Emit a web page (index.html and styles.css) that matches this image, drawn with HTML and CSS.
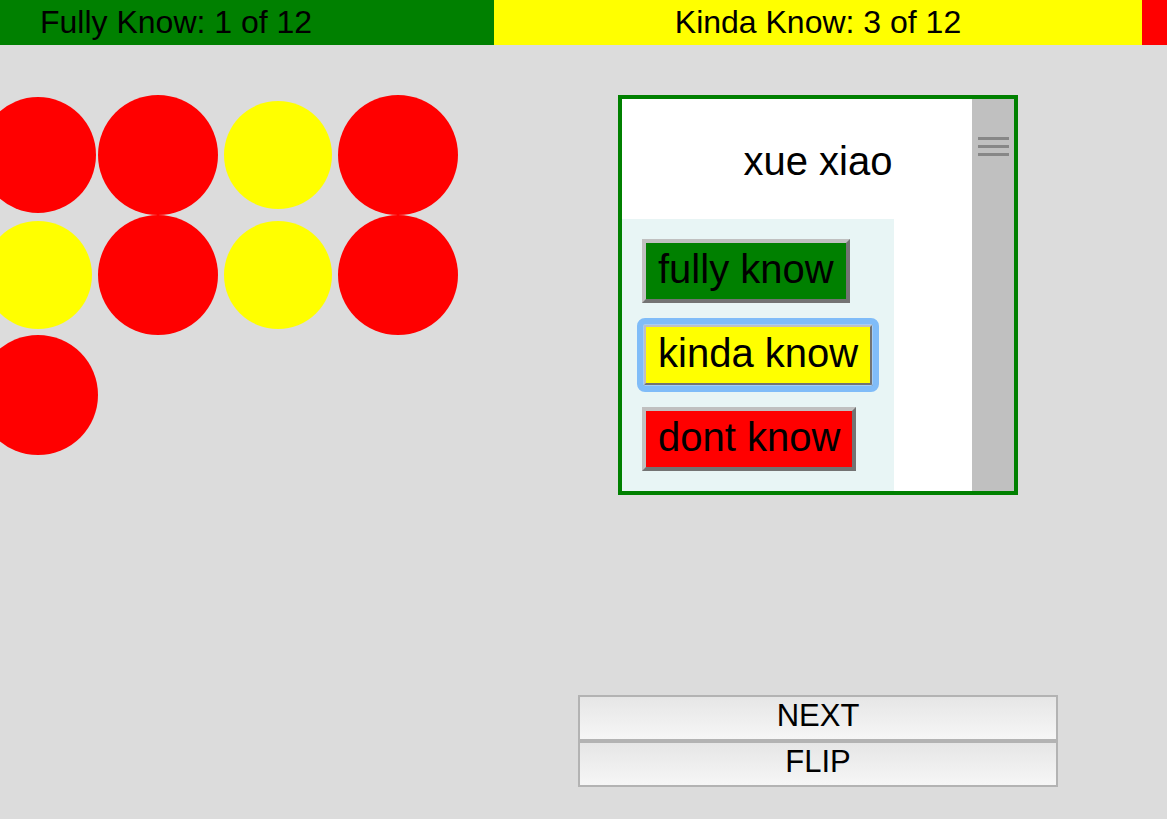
FILE: index.html
```html
<!DOCTYPE html>
<html lang="en">
<head>
<meta charset="utf-8">
<title>Flashcards</title>
<link rel="stylesheet" href="styles.css">
</head>
<body>
  <div class="topbar">
    <div class="seg seg-full">Fully Know: 1 of 12</div>
    <div class="seg seg-kinda">Kinda Know: 3 of 12</div>
    <div class="seg seg-dont"></div>
  </div>
  <div class="main">
    <div class="bubbles">
      <div class="cell"><span class="dot dot-red dot-small"></span></div>
      <div class="cell"><span class="dot dot-red"></span></div>
      <div class="cell"><span class="dot dot-yellow"></span></div>
      <div class="cell"><span class="dot dot-red"></span></div>
      <div class="cell"><span class="dot dot-yellow"></span></div>
      <div class="cell"><span class="dot dot-red"></span></div>
      <div class="cell"><span class="dot dot-yellow"></span></div>
      <div class="cell"><span class="dot dot-red"></span></div>
      <div class="cell"><span class="dot dot-red"></span></div>
    </div>
    <div class="stage">
      <div class="card">
        <div class="card-front">xue xiao</div>
        <div class="rating">
          <button class="rate rate-full">fully know</button>
          <button class="rate rate-kinda">kinda know</button>
          <button class="rate rate-dont">dont know</button>
        </div>
        <div class="scrollbar"><span></span><span></span><span></span></div>
      </div>
      <div class="controls">
        <button class="ctl">NEXT</button>
        <button class="ctl">FLIP</button>
      </div>
    </div>
  </div>
</body>
</html>
```
FILE: styles.css
```css
html, body {
  margin: 0;
  padding: 0;
}
body {
  background: #dcdcdc;
  font-family: "Liberation Sans", Arial, sans-serif;
  color: #000;
  width: 1167px;
  height: 819px;
  overflow: hidden;
}

.topbar {
  display: flex;
  height: 45px;
  font-size: 32px;
}
.seg {
  display: flex;
  align-items: center;
  white-space: nowrap;
}
.seg-full {
  flex: 0 0 494px;
  background: #008000;
  padding-left: 40px;
  box-sizing: border-box;
}
.seg-kinda {
  flex: 0 0 648px;
  background: #ffff00;
  justify-content: center;
}
.seg-dont {
  flex: 1;
  background: #ff0000;
}

.main {
  display: flex;
  height: 774px;
}

.bubbles {
  flex: 0 0 480px;
  margin-left: -22px;
  padding-top: 50px;
  display: grid;
  grid-template-columns: repeat(4, 120px);
  grid-auto-rows: 120px;
  align-content: start;
}
.cell {
  display: flex;
  align-items: center;
  justify-content: center;
}
.dot {
  display: block;
  width: 120px;
  height: 120px;
  border-radius: 50%;
}
.dot-red { background: #ff0000; }
.dot-yellow {
  background: #ffff00;
  width: 108px;
  height: 108px;
}
.dot-small {
  width: 116px;
  height: 116px;
}

.stage {
  flex: 0 0 698px;
  margin-left: auto;
  display: flex;
  flex-direction: column;
  align-items: center;
}

.card {
  position: relative;
  margin-top: 50px;
  width: 400px;
  height: 400px;
  box-sizing: border-box;
  border: 4px solid #008000;
  background: #fff;
  display: flex;
  flex-direction: column;
  align-items: flex-start;
}
.card-front {
  align-self: stretch;
  height: 120px;
  box-sizing: border-box;
  padding-top: 5px;
  display: flex;
  align-items: center;
  justify-content: center;
  font-size: 40px;
}
.rating {
  flex: 1;
  display: flex;
  flex-direction: column;
  align-items: flex-start;
  gap: 20px;
  padding: 20px;
  background: #e8f5f5;
}
.rate {
  position: relative;
  height: 64px;
  box-sizing: border-box;
  margin: 0;
  padding: 0 12px 3px;
  font-family: inherit;
  font-size: 40px;
  color: #000;
  border: 4px solid;
  border-color: #c0c0c0 #737373 #737373 #c0c0c0;
  border-radius: 0;
}
.rate-full { background: #008000; }
.rate-kinda { background: #ffff00; }
.rate-dont { background: #ff0000; }
.rate-kinda::after {
  content: "";
  position: absolute;
  inset: -9px;
  border: 6px solid #80bcf8;
  border-radius: 8px;
  box-shadow: inset 0 0 0 1px #a4cdf6;
}

.scrollbar {
  position: absolute;
  top: 0;
  right: 0;
  bottom: 0;
  width: 42px;
  background: #c0c0c0;
  display: flex;
  flex-direction: column;
  align-items: center;
  gap: 5px;
  padding-top: 38px;
  box-sizing: border-box;
}
.scrollbar span {
  display: block;
  width: 31px;
  height: 3px;
  background: #878787;
}

.controls {
  margin-top: auto;
  margin-bottom: 32px;
  width: 480px;
  display: flex;
  flex-direction: column;
}
.ctl {
  height: 46px;
  box-sizing: border-box;
  margin: 0;
  padding: 0 0 4px;
  border: 2px solid #b3b3b3;
  border-radius: 0;
  background: linear-gradient(#e6e6e6, #f6f6f6);
  font-family: inherit;
  font-size: 31px;
  color: #000;
}
```
